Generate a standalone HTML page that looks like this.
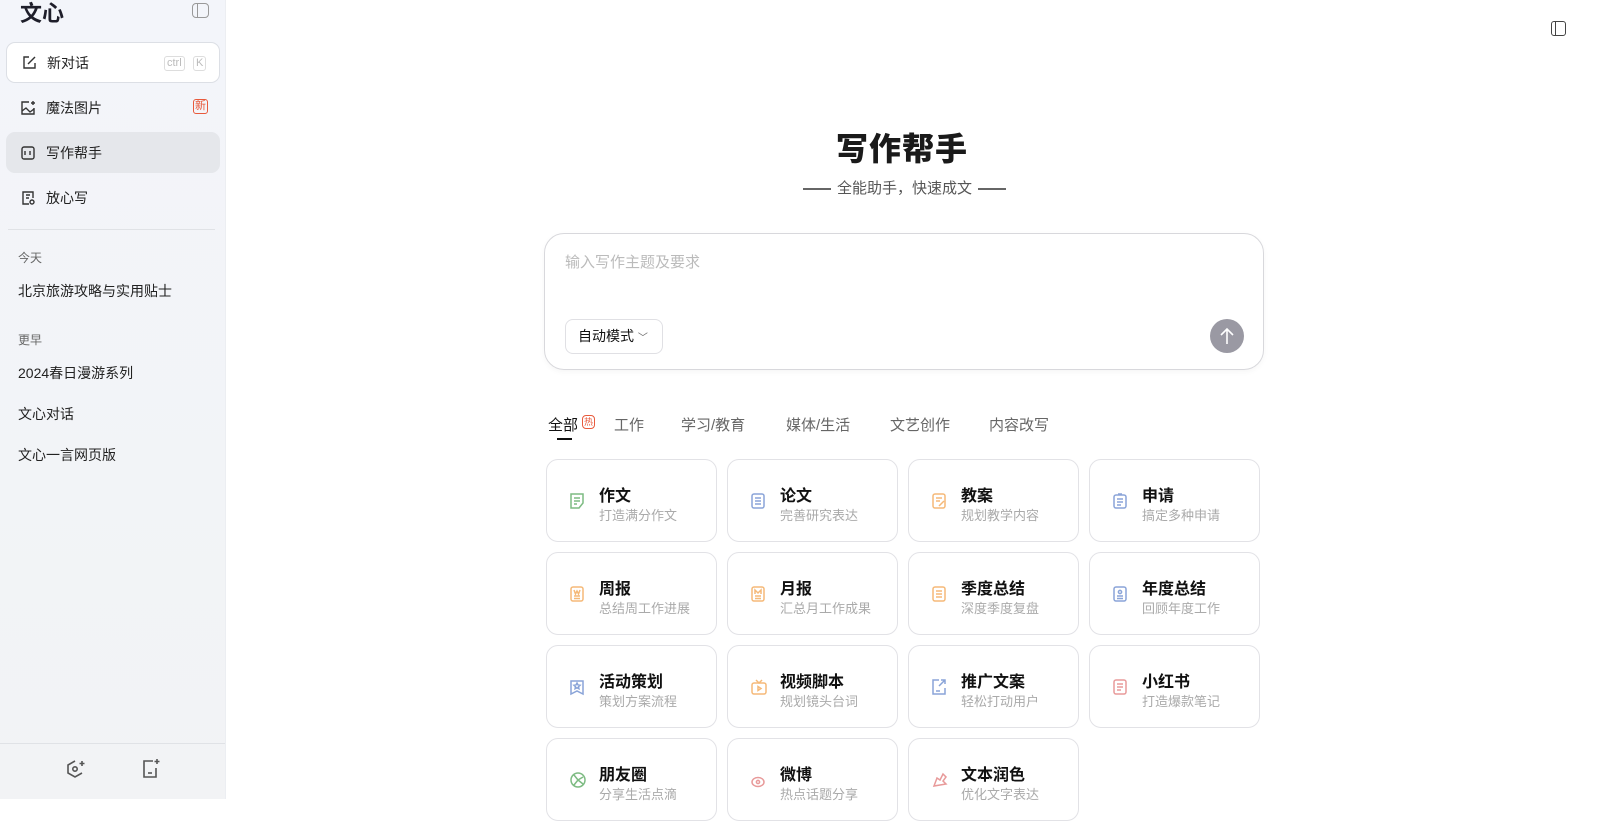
<!DOCTYPE html>
<html><head><meta charset="utf-8"><style>
*{box-sizing:border-box;margin:0;padding:0}
body{width:1598px;height:799px;overflow:hidden;background:#fff;font-family:"Liberation Sans","Noto Sans CJK SC",sans-serif;color:#111;position:relative}
.side{position:absolute;left:0;top:0;width:226px;height:799px;background:linear-gradient(180deg,#f3f5fa,#f2f3f5);border-right:1px solid #eceef2}
.logo{position:absolute;left:20px;top:-4px;font-size:22px;font-weight:bold;color:#1e1e2a}
.tog{position:absolute;left:192px;top:3px;width:17px;height:15px;border:1.5px solid #999;border-radius:4px}
.tog:after{content:"";position:absolute;left:4px;top:0;bottom:0;border-left:1.5px solid #999}
.item{position:absolute;left:6px;width:214px;height:41px;border-radius:9px;display:flex;align-items:center;padding-left:14px;font-size:14px;color:#222}
.item svg{margin-right:10px}
.kb{position:absolute;top:13px;font-size:11px;color:#bbb;border:1px solid #ddd;border-radius:3px;padding:0 2px;line-height:13px}
.sec{position:absolute;left:18px;font-size:12px;color:#666}
.h{position:absolute;left:18px;font-size:14px;color:#222}
.card{position:absolute;width:171px;height:83px;border:1px solid #e2e2e6;border-radius:12px;background:#fff}
.card svg{position:absolute;left:22px;top:32px}
.card b{position:absolute;left:52px;top:22px;font-size:16px;color:#111}
.card span{position:absolute;left:52px;top:45px;font-size:13px;color:#aaa}
.tab{position:absolute;top:414px;font-size:15px;color:#666}
</style></head><body>
<div class="side">
<div class="logo">文心</div><div class="tog"></div>
<div class="item" style="top:42px;background:#fff;border:1px solid #dcdfe5"><svg width="16" height="16" viewBox="0 0 16 16" fill="none" stroke="#333" stroke-width="1.4"><path d="M8 2H3v11h11V8"/><path d="M7 9l7-7"/></svg>新对话<span class="kb" style="left:157px">ctrl</span><span class="kb" style="left:186px">K</span></div>
<div class="item" style="top:87px"><svg width="16" height="16" viewBox="0 0 16 16" fill="none" stroke="#333" stroke-width="1.4"><path d="M9 2H2v12h12V8"/><path d="M2 11l4-3 4 4 4-3"/><path d="M13 1v4M11 3h4"/></svg>魔法图片<span style="position:absolute;left:187px;top:12px;font-size:11px;color:#e85a3c;border:1px solid #e85a3c;border-radius:3px;line-height:13px;padding:0 1px">新</span></div>
<div class="item" style="top:132px;background:#e5e7eb"><svg width="16" height="16" viewBox="0 0 16 16" fill="none" stroke="#333" stroke-width="1.4"><rect x="2" y="2" width="12" height="12" rx="2"/><path d="M5 6v4M10 6v4"/></svg>写作帮手</div>
<div class="item" style="top:177px"><svg width="16" height="16" viewBox="0 0 16 16" fill="none" stroke="#333" stroke-width="1.4"><path d="M13 8V2H3v12h6"/><path d="M6 5h4M6 8h3"/><circle cx="12" cy="12" r="2"/></svg>放心写</div>
<div style="position:absolute;left:8px;right:10px;top:229px;border-top:1px solid #e0e2e6"></div>
<div class="sec" style="top:249px">今天</div>
<div class="h" style="top:281px">北京旅游攻略与实用贴士</div>
<div class="sec" style="top:331px">更早</div>
<div class="h" style="top:363px">2024春日漫游系列</div>
<div class="h" style="top:404px">文心对话</div>
<div class="h" style="top:445px">文心一言网页版</div>
<div style="position:absolute;left:0;right:0;top:743px;border-top:1px solid #e0e2e6"></div>
<svg style="position:absolute;left:65px;top:758px" width="22" height="22" viewBox="0 0 22 22" fill="none" stroke="#555" stroke-width="1.6"><path d="M10 3L3 7v8l7 4 7-4"/><circle cx="10" cy="11" r="2.2"/><path d="M17 3v5M14.5 5.5h5"/></svg>
<svg style="position:absolute;left:140px;top:758px" width="22" height="22" viewBox="0 0 22 22" fill="none" stroke="#555" stroke-width="1.6"><path d="M13 3H4v16h12v-9"/><path d="M8 15h4"/><path d="M17 1v5M14.5 3.5h5"/></svg>
</div>
<div style="position:absolute;left:1551px;top:21px;width:15px;height:15px;border:1.5px solid #444;border-radius:3px"><div style="position:absolute;left:3px;top:0;bottom:0;border-left:1.5px solid #444"></div></div>
<div style="position:absolute;left:0;right:0;margin-left:226px;top:124px;text-align:center;width:1372px">
<div style="font-size:32px;font-weight:900;color:#1a1a1a;letter-spacing:1px;transform:translateX(-10px)">写作帮手</div>
</div>
<div style="position:absolute;left:797px;top:177px;width:215px;text-align:center;font-size:15px;color:#555"><span style="display:inline-block;width:28px;border-top:2px solid #666;vertical-align:middle;margin-right:6px"></span>全能助手，快速成文<span style="display:inline-block;width:28px;border-top:2px solid #666;vertical-align:middle;margin-left:6px"></span></div>
<div style="position:absolute;left:544px;top:233px;width:720px;height:137px;border:1px solid #d8d8dc;border-radius:20px;box-shadow:0 2px 6px rgba(0,0,0,.04)">
<div style="position:absolute;left:20px;top:17px;font-size:15px;color:#bbb">输入写作主题及要求</div>
<div style="position:absolute;left:20px;top:85px;width:98px;height:35px;border:1px solid #e0e0e4;border-radius:8px;font-size:14px;line-height:33px;padding-left:12px;color:#111">自动模式 <span style="font-size:10px;color:#666">﹀</span></div>
<div style="position:absolute;left:665px;top:85px;width:34px;height:34px;border-radius:50%;background:#9a99a3"><svg width="34" height="34" viewBox="0 0 34 34" fill="none" stroke="#fff" stroke-width="1.6"><path d="M17 25V10M11 16l6-6 6 6"/></svg></div>
</div>
<div class="tab" style="left:548px;color:#111">全部</div>
<span style="position:absolute;left:582px;top:415px;font-size:9px;color:#e85a3c;border:1px solid #e85a3c;border-radius:4px;line-height:12px;padding:0 1px">热</span>
<div style="position:absolute;left:557px;top:438px;width:15px;height:2px;background:#111"></div>
<div class="tab" style="left:614px">工作</div>
<div class="tab" style="left:681px">学习/教育</div>
<div class="tab" style="left:786px">媒体/生活</div>
<div class="tab" style="left:890px">文艺创作</div>
<div class="tab" style="left:989px">内容改写</div>

<div class="card" style="left:546px;top:459px"><svg width="16" height="18" viewBox="0 0 16 18" fill="none" stroke="#7dbb82" stroke-width="1.5"><path d="M14 11V2H2v14h8z"/><path d="M5 6h6M5 9h6M5 12h3"/></svg><b>作文</b><span>打造满分作文</span></div>
<div class="card" style="left:727px;top:459px"><svg width="16" height="18" viewBox="0 0 16 18" fill="none" stroke="#8aa4d8" stroke-width="1.5"><rect x="2" y="2" width="12" height="14" rx="2"/><path d="M5 6h6M5 9h6M5 12h6"/></svg><b>论文</b><span>完善研究表达</span></div>
<div class="card" style="left:908px;top:459px"><svg width="16" height="18" viewBox="0 0 16 18" fill="none" stroke="#f5b978" stroke-width="1.5"><rect x="2" y="2" width="12" height="14" rx="2"/><path d="M5 6h6M5 9h4M8 14l5-5"/></svg><b>教案</b><span>规划教学内容</span></div>
<div class="card" style="left:1089px;top:459px"><svg width="16" height="18" viewBox="0 0 16 18" fill="none" stroke="#8aa4d8" stroke-width="1.5"><rect x="2" y="3" width="12" height="13" rx="2"/><path d="M6 2h4M5 7h6M5 10h6M5 13h4"/></svg><b>申请</b><span>搞定多种申请</span></div>

<div class="card" style="left:546px;top:552px"><svg width="16" height="18" viewBox="0 0 16 18" fill="none" stroke="#f5b978" stroke-width="1.5"><rect x="2" y="2" width="12" height="14" rx="2"/><path d="M5 5l1.5 4L8 6l1.5 3L11 5M5 11h6M5 13.5h6"/></svg><b>周报</b><span>总结周工作进展</span></div>
<div class="card" style="left:727px;top:552px"><svg width="16" height="18" viewBox="0 0 16 18" fill="none" stroke="#f5b978" stroke-width="1.5"><rect x="2" y="2" width="12" height="14" rx="2"/><path d="M5 9V5l3 3 3-3v4M5 11h6M5 13.5h6"/></svg><b>月报</b><span>汇总月工作成果</span></div>
<div class="card" style="left:908px;top:552px"><svg width="16" height="18" viewBox="0 0 16 18" fill="none" stroke="#f5b978" stroke-width="1.5"><rect x="2" y="2" width="12" height="14" rx="2"/><path d="M5 6h6M5 9h6M5 12h6"/></svg><b>季度总结</b><span>深度季度复盘</span></div>
<div class="card" style="left:1089px;top:552px"><svg width="16" height="18" viewBox="0 0 16 18" fill="none" stroke="#8aa4d8" stroke-width="1.5"><rect x="2" y="2" width="12" height="14" rx="2"/><circle cx="8" cy="7" r="1.6"/><path d="M5 11h6M5 13.5h6"/></svg><b>年度总结</b><span>回顾年度工作</span></div>

<div class="card" style="left:546px;top:645px"><svg width="16" height="18" viewBox="0 0 16 18" fill="none" stroke="#8aa4d8" stroke-width="1.5"><path d="M2 3h12v13l-6-3-6 3z"/><path d="M8 5l1 2 2 .3-1.5 1.4.4 2L8 9.7l-1.9 1 .4-2L5 7.3 7 7z"/></svg><b>活动策划</b><span>策划方案流程</span></div>
<div class="card" style="left:727px;top:645px"><svg width="18" height="18" viewBox="0 0 18 18" fill="none" stroke="#f5b978" stroke-width="1.5"><rect x="2" y="5" width="14" height="11" rx="2"/><path d="M6 2l3 3 3-3M8 8.5v4l3-2z"/></svg><b>视频脚本</b><span>规划镜头台词</span></div>
<div class="card" style="left:908px;top:645px"><svg width="16" height="18" viewBox="0 0 16 18" fill="none" stroke="#8aa4d8" stroke-width="1.5"><path d="M8 2H2v14h12v-6"/><path d="M10 2h4v4M14 2l-6 6M5 13h4"/></svg><b>推广文案</b><span>轻松打动用户</span></div>
<div class="card" style="left:1089px;top:645px"><svg width="16" height="18" viewBox="0 0 16 18" fill="none" stroke="#e89a9a" stroke-width="1.5"><rect x="2" y="2" width="12" height="14" rx="2"/><path d="M5 6h6M5 9h6M5 12h4"/></svg><b>小红书</b><span>打造爆款笔记</span></div>

<div class="card" style="left:546px;top:738px"><svg width="18" height="18" viewBox="0 0 18 18" fill="none" stroke="#7dbb82" stroke-width="1.5"><circle cx="9" cy="9" r="7"/><path d="M5 4l4 5M14 6l-5 3M9 9l-4 5M9 9l5 4"/></svg><b>朋友圈</b><span>分享生活点滴</span></div>
<div class="card" style="left:727px;top:738px"><svg width="18" height="18" viewBox="0 0 18 18" fill="none" stroke="#e89a9a" stroke-width="1.5"><ellipse cx="8" cy="11" rx="6" ry="4.5"/><circle cx="8" cy="11" r="1.6"/></svg><b>微博</b><span>热点话题分享</span></div>
<div class="card" style="left:908px;top:738px"><svg width="18" height="18" viewBox="0 0 18 18" fill="none" stroke="#e89a9a" stroke-width="1.5"><path d="M3 15l3-8 3 2 3-6 3 3-3 4 3 3-6 1z"/></svg><b>文本润色</b><span>优化文字表达</span></div>
</body></html>
